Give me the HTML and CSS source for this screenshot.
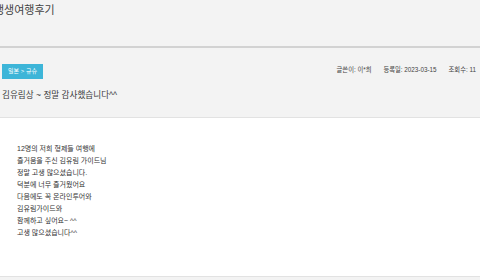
FILE: index.html
```html
<!DOCTYPE html>
<html lang="ko">
<head>
    <meta charset="UTF-8">
    <title>생생여행후기</title>
    <link rel="stylesheet" href="styles.css">
</head>
<body>
    <div class="page-head">
        <h2 class="page-title">생생여행후기</h2>
    </div>

    <div class="post-head">
        <div class="post-info">
            <span class="badge">일본 &gt; 규슈</span>
            <ul class="meta">
                <li>글쓴이: 이*희</li>
                <li>등록일: 2023-03-15</li>
                <li>조회수: 11</li>
            </ul>
        </div>
        <h3 class="post-title">김유림상 ~ 정말 감사했습니다^^</h3>
    </div>

    <div class="post-body">
        <p>
            12명의 저희 형제들 여행에<br>
            즐거움을 주신 김유림 가이드님<br>
            정말 고생 많으셨습니다.<br>
            덕분에 너무 즐거웠어요<br>
            다음에도 꼭 온라인투어와<br>
            김유림가이드와<br>
            함께하고 싶어요~ ^^<br>
            고생 많으셨습니다^^
        </p>
    </div>
</body>
</html>
```

FILE: styles.css
```css
body {
    margin: 0;
    background: #f3f3f3;
    font-family: "Liberation Sans", "Noto Sans CJK KR", sans-serif;
    color: #444;
    overflow: hidden;
}

.page-head {
    height: 46px;
    border-bottom: 2px solid #d2d2d2;
}

.page-title {
    margin: 0 0 0 -6px;
    padding-top: 2px;
    font-size: 11px;
    font-weight: normal;
    line-height: 16px;
    color: #444;
}

.post-head {
    padding: 16px 4px 0 2px;
    height: 53px;
    border-bottom: 1px solid #e2e2e2;
}

.post-info {
    display: flex;
    align-items: center;
    justify-content: space-between;
}

.badge {
    width: 41px;
    height: 15px;
    line-height: 15px;
    text-align: center;
    background: #3db5d8;
    color: #fff;
    font-size: 6px;
}

.meta {
    display: flex;
    gap: 12px;
    margin: -5px 0 0;
    padding: 0;
    list-style: none;
    font-size: 6.3px;
    color: #444;
}

.post-title {
    margin: 10px 0 0;
    font-size: 8.6px;
    font-weight: normal;
    line-height: 12px;
    color: #3a3a3a;
}

.post-body {
    background: #fff;
    height: 158px;
    padding: 0 17px;
    border-bottom: 1px solid #e2e2e2;
}

.post-body p {
    margin: 0;
    padding-top: 25px;
    font-size: 7px;
    line-height: 12px;
    color: #333;
}
```
